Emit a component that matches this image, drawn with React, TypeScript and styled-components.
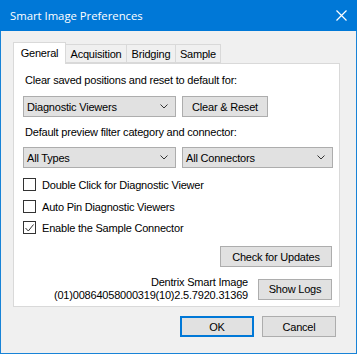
import React from 'react';
import styled, { createGlobalStyle } from 'styled-components';

const GlobalStyle = createGlobalStyle`
  html, body {
    margin: 0;
    padding: 0;
    background: #ffffff;
  }
  * {
    box-sizing: border-box;
  }
`;

const Window = styled.div`
  width: 357px;
  height: 354px;
  display: flex;
  flex-direction: column;
  background: #f0f0f0;
  border: 1px solid #1883d7;
  border-top: none;
  font-family: 'Liberation Sans', Arial, sans-serif;
  font-size: 11px;
  letter-spacing: -0.2px;
  color: #000;
`;

const TitleBar = styled.div`
  height: 31px;
  margin: 0 -1px;
  background: #0078d7;
  color: #fff;
  display: flex;
  align-items: center;
  justify-content: space-between;
  padding: 0 10px 1px 10px;
  font-family: 'Open Sans', 'Noto Sans', sans-serif;
  font-size: 11.3px;
  letter-spacing: 0;
`;

const CloseIcon = styled.svg`
  width: 11px;
  height: 11px;
`;

const Body = styled.div`
  flex: 1;
  padding: 11px 17px 0 12px;
  display: flex;
  flex-direction: column;
`;

const TabStrip = styled.div`
  display: flex;
  align-items: flex-end;
  height: 21px;
  position: relative;
  z-index: 1;
`;

const Tab = styled.div<{ $active?: boolean; $w: number }>`
  width: ${p => p.$w}px;
  height: ${p => (p.$active ? 22 : 19)}px;
  margin-bottom: ${p => (p.$active ? -1 : 0)}px;
  margin-left: ${p => (p.$active ? 0 : -1)}px;
  border: 1px solid #d9d9d9;
  border-bottom: ${p => (p.$active ? 'none' : '1px solid #d9d9d9')};
  background: ${p => (p.$active ? '#ffffff' : '#f0f0f0')};
  display: flex;
  align-items: center;
  justify-content: center;
  padding-bottom: ${p => (p.$active ? 2 : 0)}px;
  &:first-child {
    margin-left: 0;
  }
`;

const Panel = styled.div`
  width: 327px;
  height: 244px;
  background: #fff;
  border: 1px solid #d9d9d9;
  padding: 9px 0 0 9px;
  display: flex;
  flex-direction: column;
`;

const Label = styled.div<{ $top: number }>`
  margin-top: ${p => p.$top}px;
  padding-left: 2px;
  line-height: 13px;
  height: 13px;
`;

const Row = styled.div<{ $top: number }>`
  display: flex;
  gap: 6px;
  margin-top: ${p => p.$top}px;
`;

const Combo = styled.div<{ $w: number }>`
  width: ${p => p.$w}px;
  height: 21px;
  background: #e1e1e1;
  border: 1px solid #adadad;
  display: flex;
  align-items: center;
  justify-content: space-between;
  padding: 0 7px 0 3px;
`;

const Chevron = styled.svg`
  width: 8px;
  height: 5px;
`;

const Button = styled.div<{ $w: number; $default?: boolean }>`
  width: ${p => p.$w}px;
  height: 21px;
  background: #e1e1e1;
  border: ${p => (p.$default ? '2px solid #0078d7' : '1px solid #adadad')};
  display: flex;
  align-items: center;
  justify-content: center;
`;

const CheckRow = styled.div<{ $top: number }>`
  display: flex;
  align-items: center;
  gap: 6px;
  margin-top: ${p => p.$top}px;
  height: 13px;
`;

const Box = styled.div`
  width: 13px;
  height: 13px;
  border: 1px solid #333;
  background: #fff;
  display: flex;
  align-items: center;
  justify-content: center;
`;

const RightRow = styled.div<{ $top: number }>`
  display: flex;
  justify-content: flex-end;
  align-items: center;
  gap: 10px;
  padding-right: 7px;
  margin-top: ${p => p.$top}px;
`;

const VersionText = styled.div`
  text-align: right;
  line-height: 13px;
`;

const Footer = styled.div`
  display: flex;
  justify-content: flex-end;
  gap: 8px;
  padding: 9px 3px 0 0;
`;

const ChevronDown = () => (
  <Chevron viewBox="0 0 8 5">
    <path d="M0.5 0.5 L4 4 L7.5 0.5" fill="none" stroke="#333" strokeWidth="1" />
  </Chevron>
);

const Check = () => (
  <svg width="9" height="8" viewBox="0 0 9 8">
    <path d="M0.5 4 L3.3 7 L8.5 0.5" fill="none" stroke="#333" strokeWidth="1" />
  </svg>
);

const App: React.FC = () => {
  return (
    <>
      <GlobalStyle />
      <Window>
        <TitleBar>
          <span>Smart Image Preferences</span>
          <CloseIcon viewBox="0 0 11 11">
            <path d="M0.5 0.5 L10.5 10.5 M10.5 0.5 L0.5 10.5" stroke="#fff" strokeWidth="1.2" />
          </CloseIcon>
        </TitleBar>
        <Body>
          <TabStrip>
            <Tab $active $w={53}>General</Tab>
            <Tab $w={62}>Acquisition</Tab>
            <Tab $w={50}>Bridging</Tab>
            <Tab $w={46}>Sample</Tab>
          </TabStrip>
          <Panel>
            <Label $top={1}>Clear saved positions and reset to default for:</Label>
            <Row $top={9}>
              <Combo $w={153}>
                <span>Diagnostic Viewers</span>
                <ChevronDown />
              </Combo>
              <Button $w={86}>Clear &amp; Reset</Button>
            </Row>
            <Label $top={9}>Default preview filter category and connector:</Label>
            <Row $top={8}>
              <Combo $w={153}>
                <span>All Types</span>
                <ChevronDown />
              </Combo>
              <Combo $w={151}>
                <span>All Connectors</span>
                <ChevronDown />
              </Combo>
            </Row>
            <CheckRow $top={10}>
              <Box />
              <span>Double Click for Diagnostic Viewer</span>
            </CheckRow>
            <CheckRow $top={9}>
              <Box />
              <span>Auto Pin Diagnostic Viewers</span>
            </CheckRow>
            <CheckRow $top={8}>
              <Box>
                <Check />
              </Box>
              <span>Enable the Sample Connector</span>
            </CheckRow>
            <RightRow $top={12}>
              <Button $w={112}>Check for Updates</Button>
            </RightRow>
            <RightRow $top={9}>
              <VersionText>
                Dentrix Smart Image
                <br />
                (01)00864058000319(10)2.5.7920.31369
              </VersionText>
              <Button $w={74}>Show Logs</Button>
            </RightRow>
          </Panel>
          <Footer>
            <Button $w={74} $default>OK</Button>
            <Button $w={74}>Cancel</Button>
          </Footer>
        </Body>
      </Window>
    </>
  );
};

export default App;
